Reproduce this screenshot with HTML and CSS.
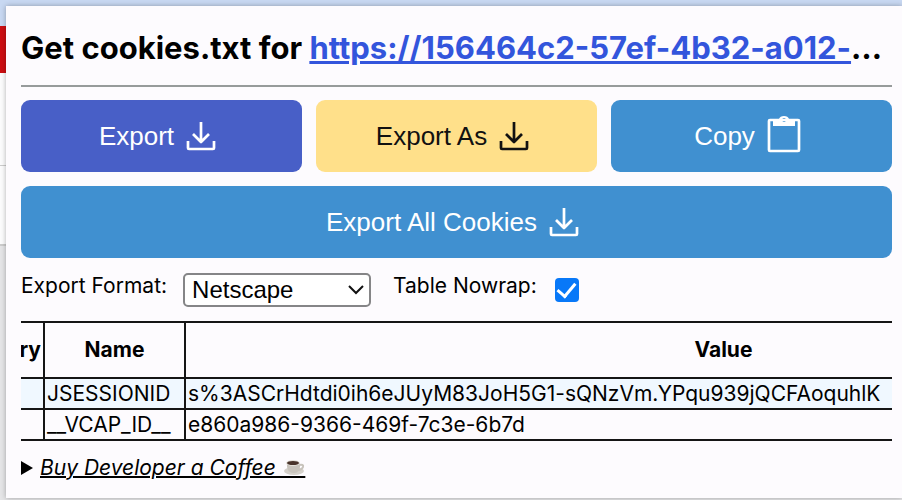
FILE: index.html
```html
<!DOCTYPE html>
<html lang="en">
<head>
<meta charset="utf-8">
<title>Get cookies.txt</title>
<link rel="stylesheet" href="styles.css">
</head>
<body>
<svg class="defs" aria-hidden="true">
  <symbol id="download" viewBox="0 0 30 30"><path d="M15 1v19M7 13l8 8 8-8M2 20v7q0 1 1 1h24q1 0 1-1v-7" fill="none" stroke="currentColor" stroke-width="2.7" stroke-linejoin="round"/></symbol>
</svg>
<div class="backdrop" aria-hidden="true"><i class="sky"></i><i class="red"></i><i class="sheet"></i><i class="sheet"></i><i class="rest"></i></div>
<main class="popup">
  <h1>Get cookies.txt for <a href="#site">https://156464c2-57ef-4b32-a012-ab12</a></h1>
  <hr>
  <div class="actions">
    <button class="btn indigo">Export <svg class="icon"><use href="#download"/></svg></button>
    <button class="btn yellow">Export As <svg class="icon"><use href="#download"/></svg></button>
    <button class="btn">Copy <svg class="clip" viewBox="0 0 34 38"><rect x="2" y="5" width="30" height="31" rx="1" fill="none" stroke="currentColor" stroke-width="2.7"/><path fill="currentColor" fill-rule="evenodd" d="M6 4h6q1-3 5-3t5 3h6v7H6zM17 3a2 2 0 1 0 .1 0z"/></svg></button>
    <button class="btn wide">Export All Cookies <svg class="icon"><use href="#download"/></svg></button>
  </div>
  <div class="options">
    <label for="format">Export Format:</label>
    <span class="picker"><select id="format"><option>Netscape</option><option>JSON</option></select><svg viewBox="0 0 18 10" aria-hidden="true"><path d="M2 1l7 7 7-7" fill="none" stroke="#111" stroke-width="2"/></svg></span>
    <label for="nowrap">Table Nowrap:</label>
    <input id="nowrap" type="checkbox" checked>
  </div>
  <div class="scroller">
    <table>
      <colgroup><col class="c-expiry"><col class="c-name"><col></colgroup>
      <thead><tr><th><div class="clipped"><span>Expiry</span></div></th><th>Name</th><th>Value</th></tr></thead>
      <tbody>
        <tr><td></td><td>JSESSIONID</td><td>s%3ASCrHdtdi0ih6eJUyM83JoH5G1-sQNzVm.YPqu939jQCFAoquhlK</td></tr>
        <tr><td></td><td>__VCAP_ID__</td><td>e860a986-9366-469f-7c3e-6b7d</td></tr>
      </tbody>
    </table>
  </div>
  <details>
    <summary><svg class="tri" viewBox="0 0 12 14"><path d="M0 0l12 7-12 7z"/></svg><span class="coffee">Buy Developer a Coffee&nbsp;&nbsp;&nbsp;&nbsp;&nbsp;<svg class="cup" viewBox="0 0 22 18"><ellipse cx="11" cy="13" rx="10" ry="4" fill="#d5d1cb"/><path d="M4 5h13v4q-1 6-6 6-6 0-7-6z" fill="#c8c3bc"/><path d="M16 7q5-1 4 2-1 3-5 3" fill="none" stroke="#c8c3bc" stroke-width="2"/><ellipse cx="10" cy="5" rx="7" ry="3" fill="#e4e0da"/><ellipse cx="10" cy="5" rx="6" ry="2" fill="#49332b"/></svg></span></summary>
  </details>
</main>
</body>
</html>
```
FILE: styles.css
```css
* { box-sizing: border-box; }
body { margin: 0; min-height: 100vh; padding: 6px 0 2px 6px; background: #c8d8f2; font: 21px/30px Inter, "Liberation Sans", sans-serif; color: #000; overflow: hidden; }
.defs { position: absolute; width: 0; height: 0; }
.backdrop { position: absolute; inset: 0; display: flex; flex-direction: column; }
.sky { height: 26px; background: #c8d8f2; }
.red { height: 47px; background: #cc0e12; }
.sheet { height: 93px; background: #fcfcfd; border-bottom: 1px solid #ccc; }
.sheet + .sheet { height: 80px; border-bottom: 2px solid #ccc; }
.rest { flex: 1; background: #e5e5e7; }
.popup { position: relative; min-height: calc(100vh - 8px); padding: 24px 10px 8px 15px; background: #fdfbfe; box-shadow: 0 0 5px rgba(0, 0, 0, .3); }
h1 { margin: 0; font-size: 31px; line-height: 36px; font-weight: 700; white-space: nowrap; overflow: hidden; text-overflow: ellipsis; }
h1 a { color: #3355dc; text-decoration-thickness: 3px; }
hr { margin: 19px 0 13px; border: 0; border-top: 2px solid #979b9b; }
.actions { display: grid; grid-template-columns: repeat(3, 1fr); gap: 14px; }
.btn { display: flex; align-items: center; justify-content: center; gap: 12px; height: 72px; padding: 0 8px 0 0; border: 0; border-radius: 9px; background: #4090d0; color: #fff; font: 26px/30px "Liberation Sans", Arial, sans-serif; }
.indigo { background: #485fc7; }
.yellow { background: #ffe08a; color: #111; }
.wide { grid-column: 1 / -1; }
.icon { width: 30px; height: 30px; }
.clip { width: 34px; height: 38px; margin-bottom: 4px; }
.options { display: flex; align-items: center; margin: 14px 0; height: 35px; }
.options label { padding-bottom: 8px; }
.picker { position: relative; margin: 0 22px 0 16px; }
.picker svg { position: absolute; right: 6px; top: 12px; width: 18px; height: 10px; pointer-events: none; }
select { display: block; appearance: none; width: 188px; height: 34px; padding: 0 7px; border: 2px solid #858587; border-radius: 5px; background: #fff; color: #000; font: 24px/30px "Liberation Sans", Arial, sans-serif; }
input { appearance: none; width: 24px; height: 24px; margin: 0 0 0 18px; border-radius: 4px; background: #0878f8; display: grid; place-items: center; }
input::before { content: ""; width: 8px; height: 15px; border: solid #fff; border-width: 0 3px 3px 0; transform: translateY(-2px) rotate(40deg); }
.scroller { overflow: hidden; }
table { width: 1242px; table-layout: fixed; border-collapse: collapse; white-space: nowrap; }
.c-expiry { width: 23px; }
.c-name { width: 141px; }
th, td { border: 2px solid #151515; padding: 0 2px; height: 31px; line-height: 28px; text-align: left; }
th { height: 56px; text-align: center; font-weight: 700; }
th:first-child, td:first-child { border-left: 0; padding-left: 0; }
tbody tr:first-child { background: #f0f8ff; }
.clipped { display: flex; justify-content: flex-end; overflow: hidden; }
details { margin-top: 12px; }
summary { display: flex; align-items: center; gap: 7px; list-style: none; }
.tri { width: 12px; height: 14px; }
.coffee { position: relative; font-style: italic; text-decoration: underline; text-decoration-thickness: 2px; }
.cup { position: absolute; right: 0; top: 5px; width: 22px; height: 18px; }
```
